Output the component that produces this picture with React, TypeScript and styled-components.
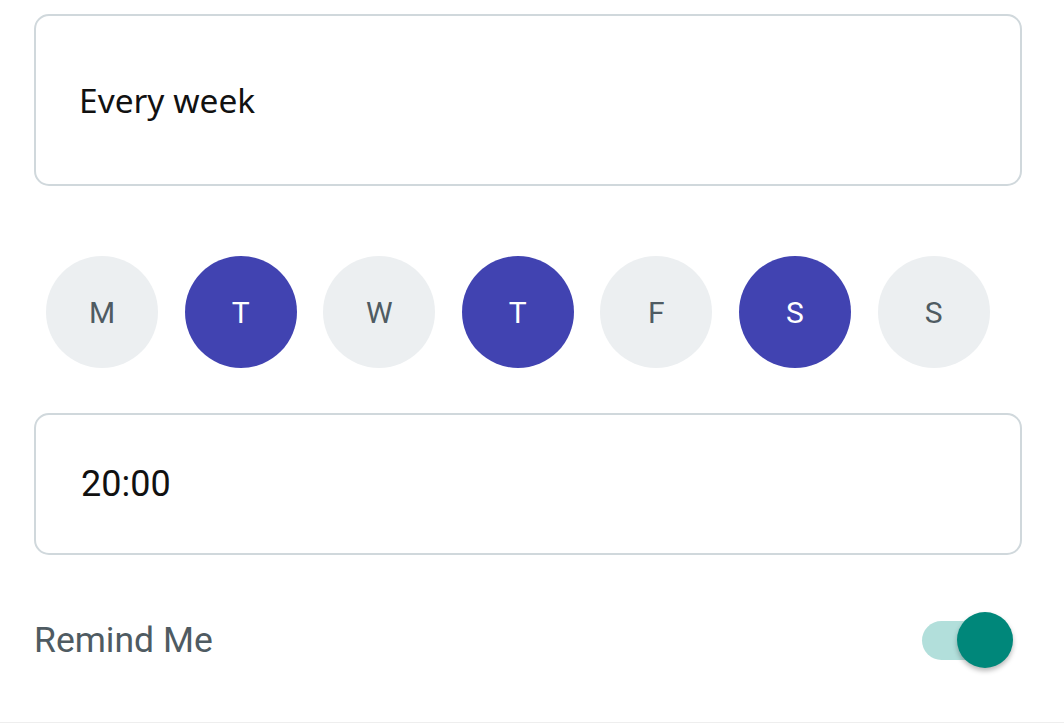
import React, { useState } from "react";
import styled, { createGlobalStyle } from "styled-components";

const days = ["M", "T", "W", "T", "F", "S", "S"];

const App = () => {
  const [selected, setSelected] = useState<number[]>([1, 3, 5]);
  const [remind, setRemind] = useState(true);

  const toggleDay = (i: number) => {
    setSelected((prev) =>
      prev.includes(i) ? prev.filter((d) => d !== i) : [...prev, i]
    );
  };

  return (
    <>
      <GlobalStyle />
      <Container>
        <RepeatField>
          <RepeatText>Every week</RepeatText>
        </RepeatField>
        <DayRow>
          {days.map((d, i) => (
            <Day
              key={i}
              $active={selected.includes(i)}
              onClick={() => toggleDay(i)}
            >
              {d}
            </Day>
          ))}
        </DayRow>
        <TimeField>
          <TimeText>20:00</TimeText>
        </TimeField>
        <RemindRow>
          <RemindLabel>Remind Me</RemindLabel>
          <Switch $on={remind} onClick={() => setRemind(!remind)}>
            <Thumb $on={remind} />
          </Switch>
        </RemindRow>
      </Container>
    </>
  );
};

export default App;

const GlobalStyle = createGlobalStyle`
  * {
    box-sizing: border-box;
  }
  body {
    margin: 0;
    background: #ffffff;
    font-family: Roboto, "Liberation Sans", sans-serif;
  }
`;

const Container = styled.div`
  width: 1064px;
  height: 723px;
  padding: 14px 42px 0 34px;
  display: flex;
  flex-direction: column;
  border-bottom: 1px solid #eeeeee;
`;

const RepeatField = styled.div`
  height: 172px;
  border: 2px solid #d0d8dc;
  border-radius: 15px;
  display: flex;
  align-items: center;
  padding-left: 43px;
`;

const RepeatText = styled.span`
  font-family: "Noto Sans", "Open Sans", sans-serif;
  font-size: 33.5px;
  color: #111111;
`;

const DayRow = styled.div`
  display: flex;
  gap: 26.6px;
  padding-left: 12px;
  margin-top: 70px;
`;

const Day = styled.div<{ $active: boolean }>`
  width: 112px;
  height: 112px;
  border-radius: 50%;
  display: flex;
  align-items: center;
  justify-content: center;
  font-size: 30px;
  background-color: ${({ $active }) => ($active ? "#4143b1" : "#eceff1")};
  color: ${({ $active }) => ($active ? "#ffffff" : "#4f5b62")};
  cursor: pointer;
`;

const TimeField = styled.div`
  height: 142px;
  margin-top: 45px;
  border: 2px solid #d0d8dc;
  border-radius: 15px;
  display: flex;
  align-items: center;
  padding-left: 45px;
`;

const TimeText = styled.span`
  font-size: 36px;
  color: #111111;
`;

const RemindRow = styled.div`
  display: flex;
  align-items: center;
  justify-content: space-between;
  height: 60px;
  margin-top: 55px;
  padding-right: 22px;
`;

const RemindLabel = styled.span`
  font-size: 35.5px;
  color: #4f5b62;
`;

const Switch = styled.div<{ $on: boolean }>`
  position: relative;
  width: 78px;
  height: 39px;
  border-radius: 20px;
  background-color: ${({ $on }) => ($on ? "#b2dfdb" : "#cfd8dc")};
  cursor: pointer;
`;

const Thumb = styled.div<{ $on: boolean }>`
  position: absolute;
  top: -9px;
  left: ${({ $on }) => ($on ? "35px" : "-10px")};
  width: 56px;
  height: 56px;
  border-radius: 50%;
  background-color: ${({ $on }) => ($on ? "#00877a" : "#fafafa")};
  box-shadow: 0 3px 5px rgba(0, 0, 0, 0.28);
`;
